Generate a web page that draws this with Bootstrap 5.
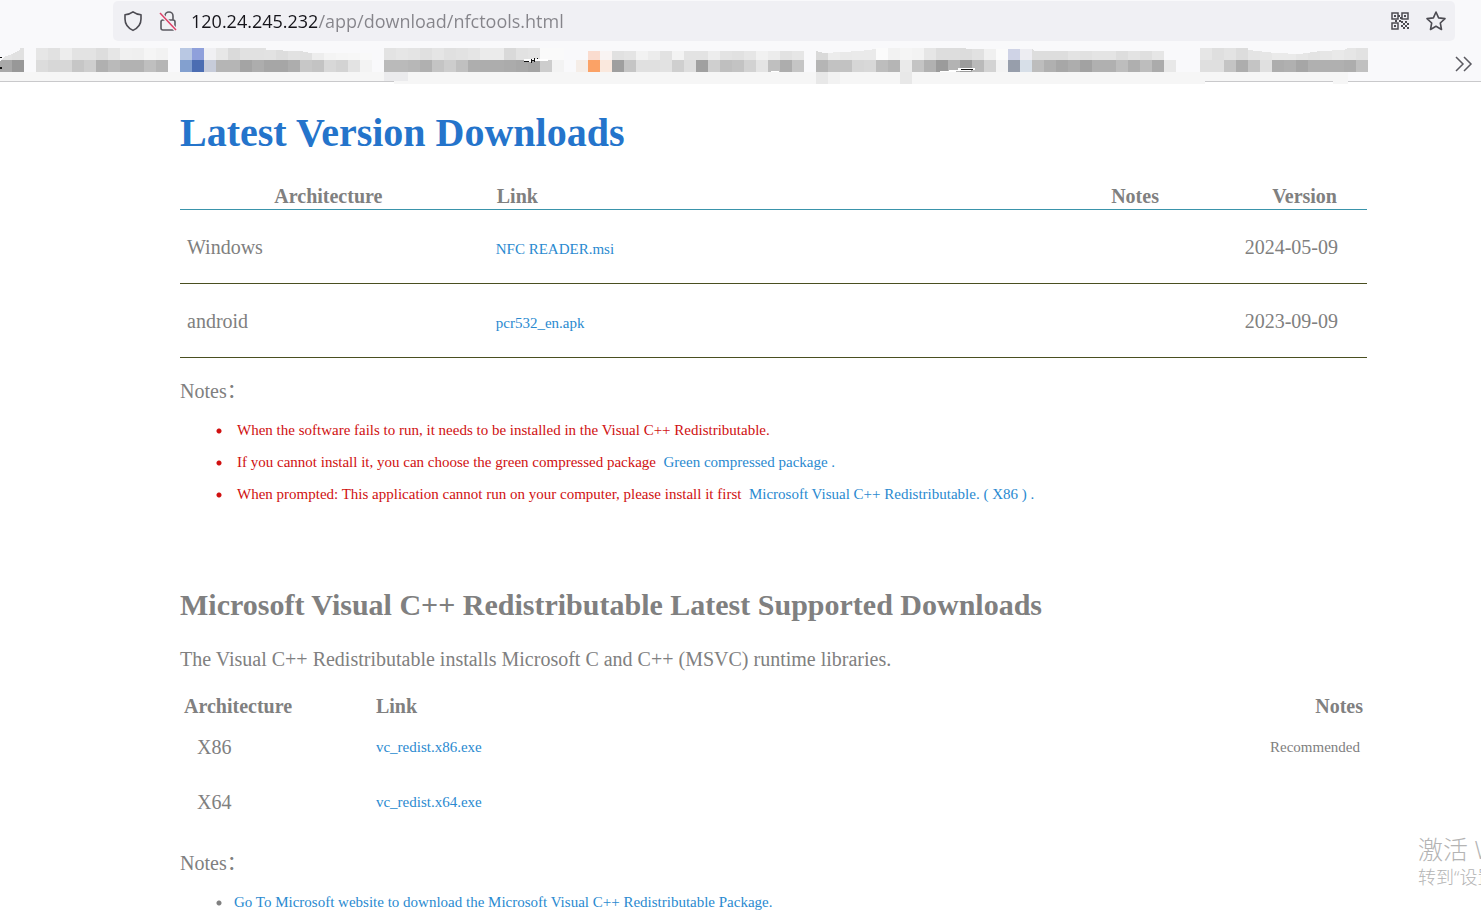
<!DOCTYPE html>
<html lang="en">
<head>
<meta charset="utf-8">
<meta name="viewport" content="width=device-width, initial-scale=1">
<title>Latest Version Downloads</title>
<link href="https://cdn.jsdelivr.net/npm/bootstrap@5.3.0/dist/css/bootstrap.min.css" rel="stylesheet">
<style>
body{font-family:"Liberation Serif","Noto Sans CJK SC",serif;font-size:20px;line-height:24px;color:#808080;background:#fff}
a{color:#2a8ad0;text-decoration:none}
.chrome{background:#f9f9fb}
.url-row{padding:1px 26px 0 113px}
.url-bar{background:#f0f0f4;border-radius:5px;height:40px;padding:0 8px 0 10px}
.url-bar button{line-height:0}
.url-input{font-family:"Open Sans","Noto Sans CJK SC",sans-serif;font-size:18px;line-height:24px;outline:0;min-width:0;
 background:linear-gradient(90deg,#15141a 130px,#85848a 130px);-webkit-background-clip:text;background-clip:text;-webkit-text-fill-color:transparent}
.bookmarks{height:41px}
.bookmark-strip{min-width:0;overflow-x:clip}
.bookmarks svg{display:block}
.more{width:32px;padding:14px 0 0 6px;box-shadow:inset 0 -1px #c9c9cb}
.page{padding:25px 114px 0 180px}
h1{font-size:40px;line-height:51px;font-weight:700;color:#2474cb;margin:0 0 25px}
h2{font-size:30px;line-height:36px;font-weight:700;margin:0 0 24px}
table{width:100%;border-collapse:collapse}
.small-text{font-size:15px}
.versions th{padding:0 30px 0 20px;height:26px}
.versions th:first-child{padding:0}
.versions thead{border-bottom:1px solid #3a94ab}
.versions thead th{border-bottom:1px solid #3a94ab}
.versions tbody td{border-bottom:1px solid #4a4f20}
.versions td{height:74px;padding:2px 29px 0 19px}
.versions td.small-text{padding-top:5px}
.versions td:first-child{padding-left:7px}
.redist-intro{margin:0 0 22px}
.redist th{padding:0 4px 0 6px;height:27px}
.redist th:first-child{padding-left:4px}
.redist td{height:55px;padding:0 7px 0 6px}
.redist td:first-child{padding-left:17px}
.notes-title{margin:21px 0 11px}
.note-list{font-size:15px;line-height:32px;margin:0;padding-left:36px;list-style:none}
.note-list li{padding-left:21px;background:radial-gradient(circle at 3px 17px,currentColor 2px,transparent 3px) no-repeat}
.note-list.note-close li{padding-left:18px}
.note-red{color:#d01010}
.redist-section{padding-top:77px}
.watermark{position:absolute;right:0;top:832px;width:63px;overflow:hidden;white-space:nowrap;color:#b4b4b4;font-family:"Open Sans","Noto Sans CJK SC",sans-serif;font-weight:300;pointer-events:none}
.wm-title{font-size:25px;line-height:34px}
.wm-text{font-size:18px;line-height:22px}
</style>
</head>
<body class="position-relative overflow-x-hidden">
<header class="chrome">
  <div class="url-row">
    <div class="url-bar d-flex align-items-center">
      <button class="btn p-0 border-0 me-3" aria-label="Tracking protection"><svg width="20" height="22" viewBox="0 0 20 22" fill="none" stroke="#4c4b52" stroke-width="1.6" stroke-linejoin="round"><path d="M10 1.800C7.600 3.600 5 4.400 2 4.800V9c0 5 3 9 8 11.400C15 18 18 14 18 9V4.800C15 4.400 12.400 3.600 10 1.800z"/></svg></button>
      <button class="btn p-0 border-0" aria-label="Connection not secure"><svg width="20" height="22" viewBox="0 0 20 22" fill="none" stroke="#5b5a61" stroke-width="1.6"><path d="M6 10V6a4 4 0 0 1 8 0v4M4 10h10a2 2 0 0 1 2 2v6a2 2 0 0 1-2 2H4a2 2 0 0 1-2-2v-6a2 2 0 0 1 2-2z"/><path d="M1 3l16 17" stroke="#f0f0f4" stroke-width="4"/><path d="M1 3l16 17" stroke="#dd3f66" stroke-width="1.5"/></svg></button>
      <input class="url-input border-0 p-0 flex-grow-1 ms-2 ps-1" type="text" aria-label="Address" value="120.24.245.232/app/download/nfctools.html">
      <button class="btn p-0 border-0 me-3" aria-label="QR code"><svg width="18" height="18" viewBox="0 0 18 18" fill="none" stroke="#4c4b52" stroke-width="1.5"><path d="M1 1h6v6H1zM11 1h6v6h-6zM1 11h6v6H1z"/><path d="M3 3h2v2H3zM13 3h2v2h-2zM3 13h2v2H3zM7 3h2v2H7zM9 5h2v2H9zM8 8h2v2H8zM4 8h2v2H4zM10 9h2v2h-2zM14 9h2v2h-2zM12 11h2v2h-2zM16 11h2v2h-2zM10 13h2v2h-2zM14 13h2v2h-2zM12 15h2v2h-2zM16 15h2v2h-2z" fill="#4c4b52" stroke="none"/></svg></button>
      <button class="btn p-0 border-0" aria-label="Bookmark this page"><svg width="22" height="22" viewBox="0 0 22 22" fill="none" stroke="#4c4b52" stroke-width="1.6" stroke-linejoin="round"><path d="M11 2l2.600 5.900 6.400.7-4.700 4.400 1.200 6.500L11 16.300l-5.500 3.200 1.200-6.500L2 8.600l6.400-.7z"/></svg></button>
    </div>
  </div>
  <div class="bookmarks d-flex">
    <div class="bookmark-strip flex-fill"><svg id="mosaic" width="1449" height="43" viewBox="0 41 1449 43" shape-rendering="crispEdges" aria-hidden="true"></svg></div>
    <button class="btn more border-0 rounded-0 d-flex align-items-start" aria-label="More bookmarks"><svg width="18" height="18" viewBox="0 0 18 18" fill="none" stroke="#5b5a61" stroke-width="1.5"><path d="M1 2l7 7-7 7M9 2l7 7-7 7"/></svg></button>
  </div>
</header>
<main class="page">
  <h1>Latest Version Downloads</h1>
  <table class="versions">
    <colgroup><col style="width:25%"><col style="width:45%"><col style="width:15%"><col style="width:15%"></colgroup>
    <thead><tr><th class="text-center">Architecture</th><th>Link</th><th class="text-end">Notes</th><th class="text-end">Version</th></tr></thead>
    <tbody>
      <tr><td>Windows</td><td class="small-text"><a href="#">NFC READER.msi</a></td><td></td><td class="text-end">2024-05-09</td></tr>
      <tr><td>android</td><td class="small-text"><a href="#">pcr532_en.apk</a></td><td></td><td class="text-end">2023-09-09</td></tr>
    </tbody>
  </table>
  <p class="notes-title">Notes：</p>
  <ul class="note-list note-red">
    <li>When the software fails to run, it needs to be installed in the Visual C++ Redistributable.</li>
    <li>If you cannot install it, you can choose the green compressed package &nbsp;<a href="#">Green compressed package .</a></li>
    <li>When prompted: This application cannot run on your computer, please install it first &nbsp;<a href="#">Microsoft Visual C++ Redistributable. ( X86 ) .</a></li>
  </ul>
  <section class="redist-section">
    <h2>Microsoft Visual C++ Redistributable Latest Supported Downloads</h2>
    <p class="redist-intro">The Visual C++ Redistributable installs Microsoft C and C++ (MSVC) runtime libraries.</p>
    <table class="redist">
      <colgroup><col style="width:16%"><col style="width:64%"><col style="width:20%"></colgroup>
      <thead><tr><th>Architecture</th><th>Link</th><th class="text-end">Notes</th></tr></thead>
      <tbody>
        <tr><td>X86</td><td class="small-text"><a href="#">vc_redist.x86.exe</a></td><td class="small-text text-end">Recommended</td></tr>
        <tr><td>X64</td><td class="small-text"><a href="#">vc_redist.x64.exe</a></td><td></td></tr>
      </tbody>
    </table>
    <p class="notes-title">Notes：</p>
    <ul class="note-list note-close"><li><a href="#">Go To Microsoft website to download the Microsoft Visual C++ Redistributable Package.</a></li></ul>
  </section>
</main>
<aside class="watermark"><div class="wm-title">激活 W</div><div class="wm-text">转到“设置</div></aside>
<script src="https://cdn.jsdelivr.net/npm/bootstrap@5.3.0/dist/js/bootstrap.bundle.min.js"></script>
<script>
// Pixelated bookmark labels: 12px tiles, [first tile, upper greys, lower greys]
const groups = [
  [0, 'e4 e1', 'a9 98'],
  [3, 'e6 e1 ed e3 e3 dd e6 f0 ef f5 f2', 'dc d7 d7 c6 ce b0 ba b2 b2 bf b5'],
  [15, 'b9c8e3 8fa0db f0f0f3 e7 da e1 e1 e2 dd e2 e0 ed f4 f6 f7 f9', '83a0cf 4b6db2 c7ccda b5 b5 a4 ad a6 a6 ad c7 c3 d8 d3 e3 f3'],
  [32, 'e3 e6 e4 e0 e5 e0 e2 e5 eb eb d9 e2 e4 fa fa', 'ba ba b7 b0 c4 cd c0 ae ad ad ab a8 a4 cd f3'],
  [48, 'f9f9fb fadccf f9f4f3 e1 e4 f2 ec e2 f3 e3 e3 ed e3 e1 e6 f1 ec e2 e6', 'f5ede7 fba266 fae8dd 9f c5 e0 e0 e2 cf de a0 cf bf c3 d2 e4 bf ad c5'],
  [68, 'd9 ec e9 ea ea fb f2 f5 f3 e6 dd dd dc e1 f0 fb', 'b5 c2 c2 d6 d8 bd b5 ea c4 b1 9b b3 9c ba d3 f3'],
  [84, 'cfd3e6 ededf2 dd dd dd e3 e1 e4 e4 dd e3 df e6', '979eab d7dfe8 bd b0 a7 ad a2 b0 b0 bd af bd ab e8'],
  [100, 'e6 df e3 dc e4 e6 ea ea e6 e3 e6 e9 e6 e2', 'df df c4 ad c4 e0 ad b0 a6 b0 b0 b0 ad c0']
];
const color = c => '#' + (c.length === 2 ? c.repeat(3) : c);
const rect = (x, y, w, h, f) => `<rect x="${x}" y="${y}" width="${w}" height="${h}" fill="${f}"/>`;
let out = rect(0, 72, 1348, 9, '#f6f6f6') + rect(394, 81, 811, 3, '#f6f6f6') + rect(1333, 81, 15, 3, '#f6f6f6')
  + rect(0, 81, 394, 1, '#c9c9cb') + rect(1205, 81, 128, 1, '#c9c9cb') + rect(1348, 81, 101, 1, '#c9c9cb');
for (const [start, top, low] of groups) {
  top.split(' ').forEach((c, i) => out += rect((start + i) * 12, 48, 12, 12, color(c)));
  low.split(' ').forEach((c, i) => out += rect((start + i) * 12, 60, 12, 12, color(c)));
}
out += rect(384, 72, 24, 9, '#ebebed') + rect(816, 72, 12, 12, '#e8e8e8') + rect(828, 72, 12, 12, '#f2f2f2') + rect(900, 72, 12, 12, '#e8e8e8');
out += '<path fill="#f9f9fb" d="M0 48h20v2L12 54 4 57 0 62zM266 48h106v5H310l-10-2-34-1zM588 48h216v3H588zM816 48h60v1L860 51 824 53 816 51zM966 48h42v1H966zM1008 48h156v3H1034l-2-2h-24zM1248 48h100l-4 2-24 1-20 3-24-1-28-3z"/>';
out += '<path fill="#fff" d="M524 59h24v2H532v1H524zM771 71h8v1h-8zM940 71l18-1v-2h17v2h-4v1l-31 1z"/><path fill="#111" d="M524 61h5v1h-5zM531 59h1v4h-1zM534 58h1v4h-1zM532 60h2v1h-2zM537 58h1v1h-1zM961 69h12v1h-12zM0 57h2v1H0zM0 67h2v2H0z"/>';
document.getElementById('mosaic').innerHTML = out;
</script>
</body>
</html>
